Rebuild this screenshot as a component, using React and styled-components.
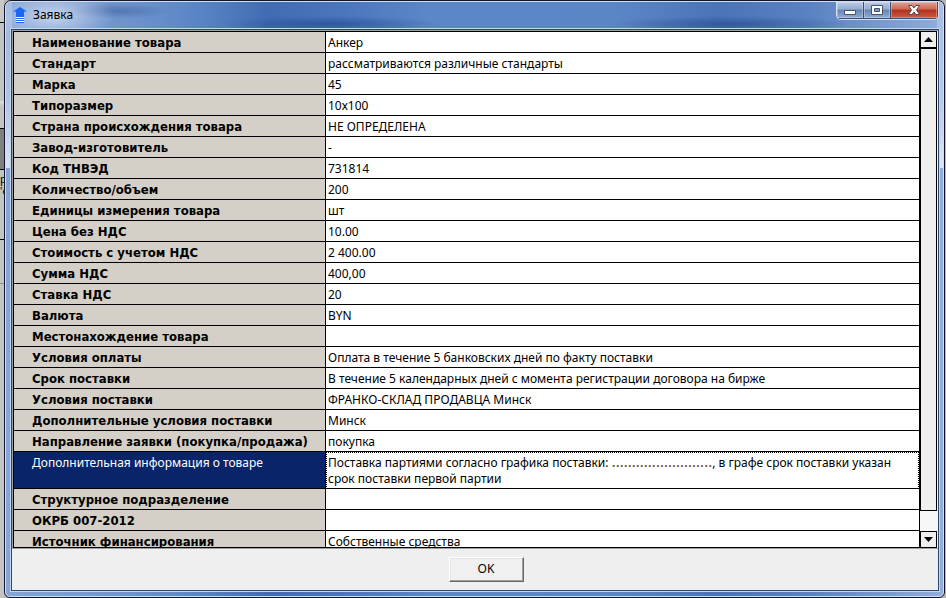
import React from 'react'
import styled, { createGlobalStyle, css } from 'styled-components'

const GlobalStyle = createGlobalStyle`
  * {
    box-sizing: border-box;
  }
  body {
    margin: 0;
    background: #b4b4b4;
    font-family: "Noto Sans", sans-serif;
    font-size: 12px;
    line-height: 16px;
    color: #000;
  }
`

const Desktop = styled.div`
  display: flex;
  height: 100vh;
  min-height: 240px;
  padding-right: 1px;
  overflow: hidden;
`

const Behind = styled.div`
  flex: none;
  width: 4px;
  overflow: hidden;
  padding-top: 173px;
  font-size: 11px;
  line-height: 12px;
  background: linear-gradient(
    #c8c8c8 22px, #000 22px, #000 23px, #c4c4c4 23px, #c4c4c4 101px, #e0e0e0 101px, #c4c4c4 106px,
    #c4c4c4 128px, #000 128px, #000 129px, #808080 129px, #808080 169px, #000 169px, #000 170px,
    #c4c4c4 170px, #c4c4c4 239px, #000 239px, #000 240px, #c4c4c4 240px, #c4c4c4 283px,
    #909090 283px, #909090 284px, #c4c4c4 284px
  );
`

const Window = styled.section`
  flex: 1;
  min-width: 0;
  display: flex;
  flex-direction: column;
  border: 1px solid #10142c;
  border-radius: 7px 7px 6px 6px;
  overflow: hidden;
`

const Frame = styled.div`
  flex: 1;
  min-height: 0;
  display: flex;
  flex-direction: column;
  padding: 0 4px 5px 5px;
  border: 1px solid #cfe0f4;
  border-radius: 6px 6px 5px 5px;
  background:
    radial-gradient(ellipse 60px 26px at 48px 14px, rgba(255, 255, 255, 0.55), transparent),
    radial-gradient(ellipse 50px 8px at 112px 9px, rgba(28, 62, 128, 0.35), transparent),
    radial-gradient(ellipse 110px 8px at 325px 22px, rgba(20, 60, 130, 0.5), transparent),
    radial-gradient(ellipse 120px 8px at 724px 22px, rgba(20, 60, 130, 0.5), transparent),
    linear-gradient(rgba(255, 255, 255, 0.2), rgba(255, 255, 255, 0.35) 100px, rgba(255, 255, 255, 0.7) 166px, transparent 166px) left / 6px 100% no-repeat,
    linear-gradient(rgba(255, 255, 255, 0.2), rgba(255, 255, 255, 0.35) 100px, rgba(255, 255, 255, 0.7) 166px, transparent 166px) right / 6px 100% no-repeat,
    linear-gradient(90deg, #86a5d6, #6c92cc 14%, #5b86c6 20%, #416cb2 28%, #4a76bc 36%, #5b86c8 45%, #5b86c6 65%, #4a74b8 76%, #5b82c2 86%, #91aedb);
`

const TitleBar = styled.header`
  flex: none;
  display: flex;
  align-items: flex-start;
  height: 27px;
`

const Title = styled.h1`
  flex: 1;
  margin: 0;
  padding: 5px 0 0 6px;
  font-size: 12px;
  font-weight: 400;
`

const AppIcon = styled.svg`
  flex: none;
  margin: 5px 0 0 2px;
`

const Controls = styled.div`
  display: flex;
  height: 18px;
  border: 1px solid #d4e0f0;
  border-top: 0;
  border-radius: 0 0 5px 5px;
  overflow: hidden;
`

const ControlButton = styled.button`
  display: flex;
  align-items: center;
  justify-content: center;
  width: ${({ $wide }) => ($wide ? '47px' : '27px')};
  padding: 0;
  border: 0;
  border-right: 1px solid #3a4c70;
  border-bottom: 1px solid #3a4c70;
  background: ${({ $close }) =>
    $close
      ? 'linear-gradient(#e0a294, #cc6852 45%, #b2301c 50%, #cc5c40)'
      : 'linear-gradient(#bccbe4, #93aad0 45%, #6884b4 50%, #8fabd6)'};
  box-shadow: inset 0 0 0 1px rgba(255, 255, 255, 0.3);
`

const Client = styled.main`
  flex: 1;
  min-height: 0;
  display: flex;
  flex-direction: column;
  border: 1px solid #2c4870;
  box-shadow: 0 0 0 1px #c2d8f0;
  background: #efefef;
`

const Grid = styled.div`
  flex: 1;
  min-height: 0;
  display: flex;
  border: 1px solid #a0a0a0;
  border-right: 0;
`

const Rows = styled.div`
  flex: 1;
  min-width: 0;
  overflow: hidden;
  border: 1px solid #000;
  background: #fff;
`

const Table = styled.table`
  width: 100%;
  border-collapse: separate;
  border-spacing: 0;
  table-layout: fixed;
`

const LabelCol = styled.col`
  width: 312px;
`

const Label = styled.th`
  padding: 3px 0 1px 18px;
  border-right: 1px solid #000;
  border-bottom: 1px solid #000;
  background: #d4d0c8;
  font-family: "DejaVu Sans Condensed", "DejaVu Sans", sans-serif;
  font-size: 13px;
  font-weight: 700;
  text-align: left;
  vertical-align: top;
  white-space: nowrap;
  ${({ $selected }) =>
    $selected &&
    css`
      background: #0a246a;
      color: #fff;
      font-family: inherit;
      font-size: 12px;
      font-weight: 400;
    `}
`

const Value = styled.td`
  height: 21px;
  padding: 3px 2px 1px;
  border-bottom: 1px solid #000;
  vertical-align: top;
  ${({ $selected }) =>
    $selected &&
    css`
      outline: 1px dotted #000;
      outline-offset: -1px;
    `}
`

const Dots = styled.span`
  color: #703808;
  font-size: 15px;
  line-height: 1px;
`

const ScrollBar = styled.div`
  flex: none;
  display: flex;
  flex-direction: column;
  width: 18px;
  padding-right: 1px;
  background: #f7f7f7;
`

const ScrollButton = styled.button`
  flex: none;
  display: flex;
  align-items: center;
  justify-content: center;
  height: 17px;
  padding: 0;
  border: 1px solid #000;
  background: #efefef;
`

const Thumb = styled.div`
  flex: 1;
  margin-bottom: 20px;
  border: 1px solid #000;
  background: #efefef;
`

const Footer = styled.footer`
  flex: none;
  display: flex;
  justify-content: center;
  padding: 8px 0;
`

const OkButton = styled.button`
  width: 75px;
  height: 25px;
  margin-left: 22px;
  padding: 0 0 2px;
  border: 1px solid;
  border-color: #fff #696969 #696969 #fff;
  box-shadow: inset -1px -1px #a0a0a0, inset 1px 1px #e3e3e3;
  background: #f0f0f0;
  font: inherit;
`

const rows = [
  ['Наименование товара', 'Анкер'],
  ['Стандарт', 'рассматриваются различные стандарты'],
  ['Марка', '45'],
  ['Типоразмер', '10х100'],
  ['Страна происхождения товара', 'НЕ ОПРЕДЕЛЕНА'],
  ['Завод-изготовитель', '-'],
  ['Код ТНВЭД', '731814'],
  ['Количество/объем', '200'],
  ['Единицы измерения товара', 'шт'],
  ['Цена без НДС', '10.00'],
  ['Стоимость с учетом НДС', '2 400.00'],
  ['Сумма НДС', '400,00'],
  ['Ставка НДС', '20'],
  ['Валюта', 'BYN'],
  ['Местонахождение товара', ''],
  ['Условия оплаты', 'Оплата в течение 5 банковских дней по факту поставки'],
  ['Срок поставки', 'В течение 5 календарных дней с момента регистрации договора на бирже'],
  ['Условия поставки', 'ФРАНКО-СКЛАД ПРОДАВЦА Минск'],
  ['Дополнительные условия поставки', 'Минск'],
  ['Направление заявки (покупка/продажа)', 'покупка'],
  [
    'Дополнительная информация о товаре',
    <>
      Поставка партиями согласно графика поставки: <Dots>.........................</Dots>, в графе срок поставки указан срок поставки первой партии
    </>,
  ],
  ['Структурное подразделение', ''],
  ['ОКРБ 007-2012', ''],
  ['Источник финансирования', 'Собственные средства'],
]

const selectedRow = 20

const App = () => {
  return (
    <>
      <GlobalStyle />
      <Desktop>
        <Behind>р<br />'о</Behind>
        <Window>
          <Frame>
            <TitleBar>
              <AppIcon width="14" height="17" viewBox="0 0 14 17">
                <path d="M7 0L14 4.500H11V16H3V4.500H0z" fill="#1668f4" />
                <path d="M3 10.5h8M3 12.5h8M3 14.5h8" stroke="#fff" />
              </AppIcon>
              <Title>Заявка</Title>
              <Controls>
                <ControlButton aria-label="Свернуть">
                  <svg width="14" height="12" viewBox="0 0 14 12">
                    <path d="M1.5 6.5h11v4h-11z" fill="#fff" stroke="#4a5468" />
                  </svg>
                </ControlButton>
                <ControlButton aria-label="Развернуть">
                  <svg width="14" height="12" viewBox="0 0 14 12">
                    <path d="M1.5 1.5h11v9h-11z" fill="#fff" stroke="#4a5468" />
                    <path d="M4.5 4.5h5v3h-5z" fill="#7c98c8" stroke="#4a5468" />
                  </svg>
                </ControlButton>
                <ControlButton $wide $close aria-label="Закрыть">
                  <svg width="14" height="12" viewBox="0 0 14 12">
                    <path d="M1.5 1.5h3.5l2 2.500 2-2.500h3.500L9.500 6l3 4.500H9L7 8l-2 2.500H1.500L4.500 6z" fill="#fff" stroke="#5a4850" />
                  </svg>
                </ControlButton>
              </Controls>
            </TitleBar>
            <Client>
              <Grid>
                <Rows>
                  <Table>
                    <colgroup>
                      <LabelCol />
                      <col />
                    </colgroup>
                    <tbody>
                      {rows.map(([label, value], i) => (
                        <tr key={label}>
                          <Label scope="row" $selected={i === selectedRow}>{label}</Label>
                          <Value $selected={i === selectedRow}>{value}</Value>
                        </tr>
                      ))}
                    </tbody>
                  </Table>
                </Rows>
                <ScrollBar>
                  <ScrollButton aria-label="Вверх">
                    <svg width="9" height="5" viewBox="0 0 9 5"><path d="M4.500 0L9 5H0z" /></svg>
                  </ScrollButton>
                  <Thumb />
                  <ScrollButton aria-label="Вниз">
                    <svg width="9" height="5" viewBox="0 0 9 5"><path d="M0 0h9L4.500 5z" /></svg>
                  </ScrollButton>
                </ScrollBar>
              </Grid>
              <Footer>
                <OkButton>OK</OkButton>
              </Footer>
            </Client>
          </Frame>
        </Window>
      </Desktop>
    </>
  )
}

export default App
